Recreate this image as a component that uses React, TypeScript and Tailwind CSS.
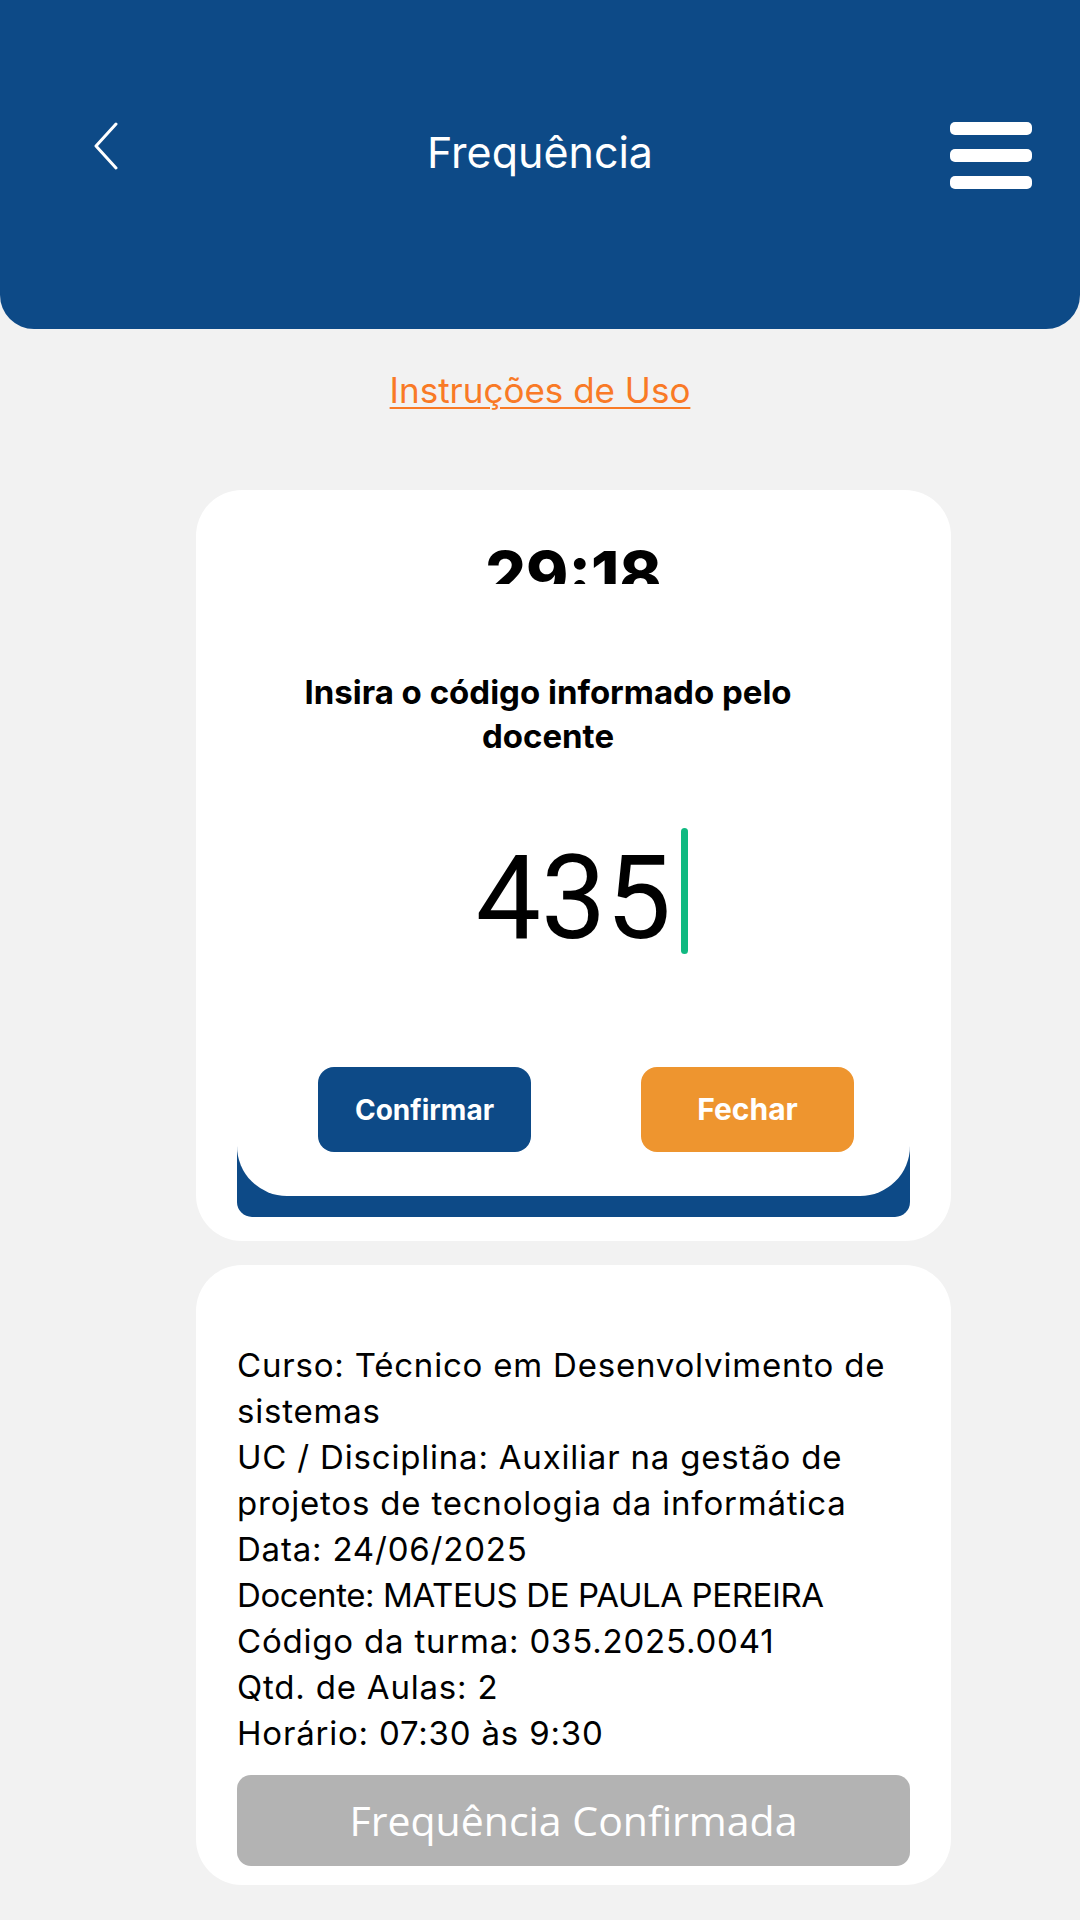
import { useState } from 'react';

const poppinsLike = "font-['Inter',sans-serif]";

function BackIcon() {
    return (
        <svg width="26" height="48" viewBox="0 0 26 48" fill="none">
            <path d="M22 2 L2 24 L22 46" stroke="white" strokeWidth="3" strokeLinecap="round" strokeLinejoin="round" />
        </svg>
    );
}

export default function App() {
    const [codigo] = useState('435');

    const info = [
        'Curso: Técnico em Desenvolvimento de sistemas',
        'UC / Disciplina: Auxiliar na gestão de projetos de tecnologia da informática',
        'Data: 24/06/2025',
    ];
    const info2 = [
        'Código da turma: 035.2025.0041',
        'Qtd. de Aulas: 2',
        'Horário: 07:30 às 9:30',
    ];

    return (
        <div className={`min-h-[1920px] w-[1080px] bg-[#f2f2f2] ${poppinsLike}`}>
            {/* header */}
            <header className="h-[329px] bg-[#0d4a87] rounded-b-[34px] grid grid-cols-3 items-start pt-[122px]">
                <div className="pl-[94px]">
                    <BackIcon />
                </div>
                <h1 className="mt-[9px] text-center text-white text-[43px] leading-none font-normal">Frequência</h1>
                <div className="justify-self-end pr-[48px] flex flex-col gap-[14px]">
                    <span className="block h-[13px] w-[82px] rounded-[5px] bg-white" />
                    <span className="block h-[13px] w-[82px] rounded-[5px] bg-white" />
                    <span className="block h-[13px] w-[82px] rounded-[5px] bg-white" />
                </div>
            </header>

            <div className="mt-[44px] text-center">
                <a href="#" className="text-[35px] leading-none text-[#f97a26] underline decoration-2 underline-offset-[4px]">
                    Instruções de Uso
                </a>
            </div>

            {/* card de codigo */}
            <section className="mt-[81px] ml-[196px] w-[755px] bg-white rounded-[46px] px-[41px] pb-[24px]">
                <div className="h-[94px] overflow-hidden pt-[53px] text-center">
                    <span className="text-[64px] leading-none font-extrabold text-black">29:18</span>
                </div>

                <p className="mt-[86px] ml-[51px] w-[520px] text-center text-[33px] leading-[44px] font-bold text-black">
                    Insira o código informado pelo docente
                </p>

                <div className="mt-[82px] text-center">
                    <span className="relative inline-block font-['Roboto',sans-serif] text-[116px] leading-none text-black">
                        {codigo}
                        <span className="absolute left-full ml-[10px] top-[-12px] h-[126px] w-[7px] rounded-full bg-[#10b981]" />
                    </span>
                </div>

                <div className="mt-[111px] bg-[#0d4a87] rounded-b-[15px] pb-[21px]">
                    <div className="bg-white rounded-b-[50px] pb-[44px] flex pl-[81px] gap-[110px]">
                        <button className="h-[85px] w-[213px] rounded-[16px] bg-[#0d4a87] text-white text-[28px] font-bold">
                            Confirmar
                        </button>
                        <button className="h-[85px] w-[213px] rounded-[16px] bg-[#ee952f] text-white text-[30px] font-bold">
                            Fechar
                        </button>
                    </div>
                </div>
            </section>

            {/* card de informacoes */}
            <section className="mt-[24px] ml-[196px] w-[755px] bg-white rounded-[46px] px-[41px] pt-[77px] pb-[19px]">
                <div className="text-[33px] leading-[46px] tracking-[0.8px] text-black">
                    {info.map((linha) => (
                        <p key={linha}>{linha}</p>
                    ))}
                    <p className="tracking-[-0.4px]">Docente: MATEUS DE PAULA PEREIRA</p>
                    {info2.map((linha) => (
                        <p key={linha}>{linha}</p>
                    ))}
                </div>
                <button className="mt-[19px] h-[91px] w-full rounded-[14px] bg-[#b3b3b3] text-white font-['Open_Sans',sans-serif] text-[41px]">
                    Frequência Confirmada
                </button>
            </section>
        </div>
    );
}
